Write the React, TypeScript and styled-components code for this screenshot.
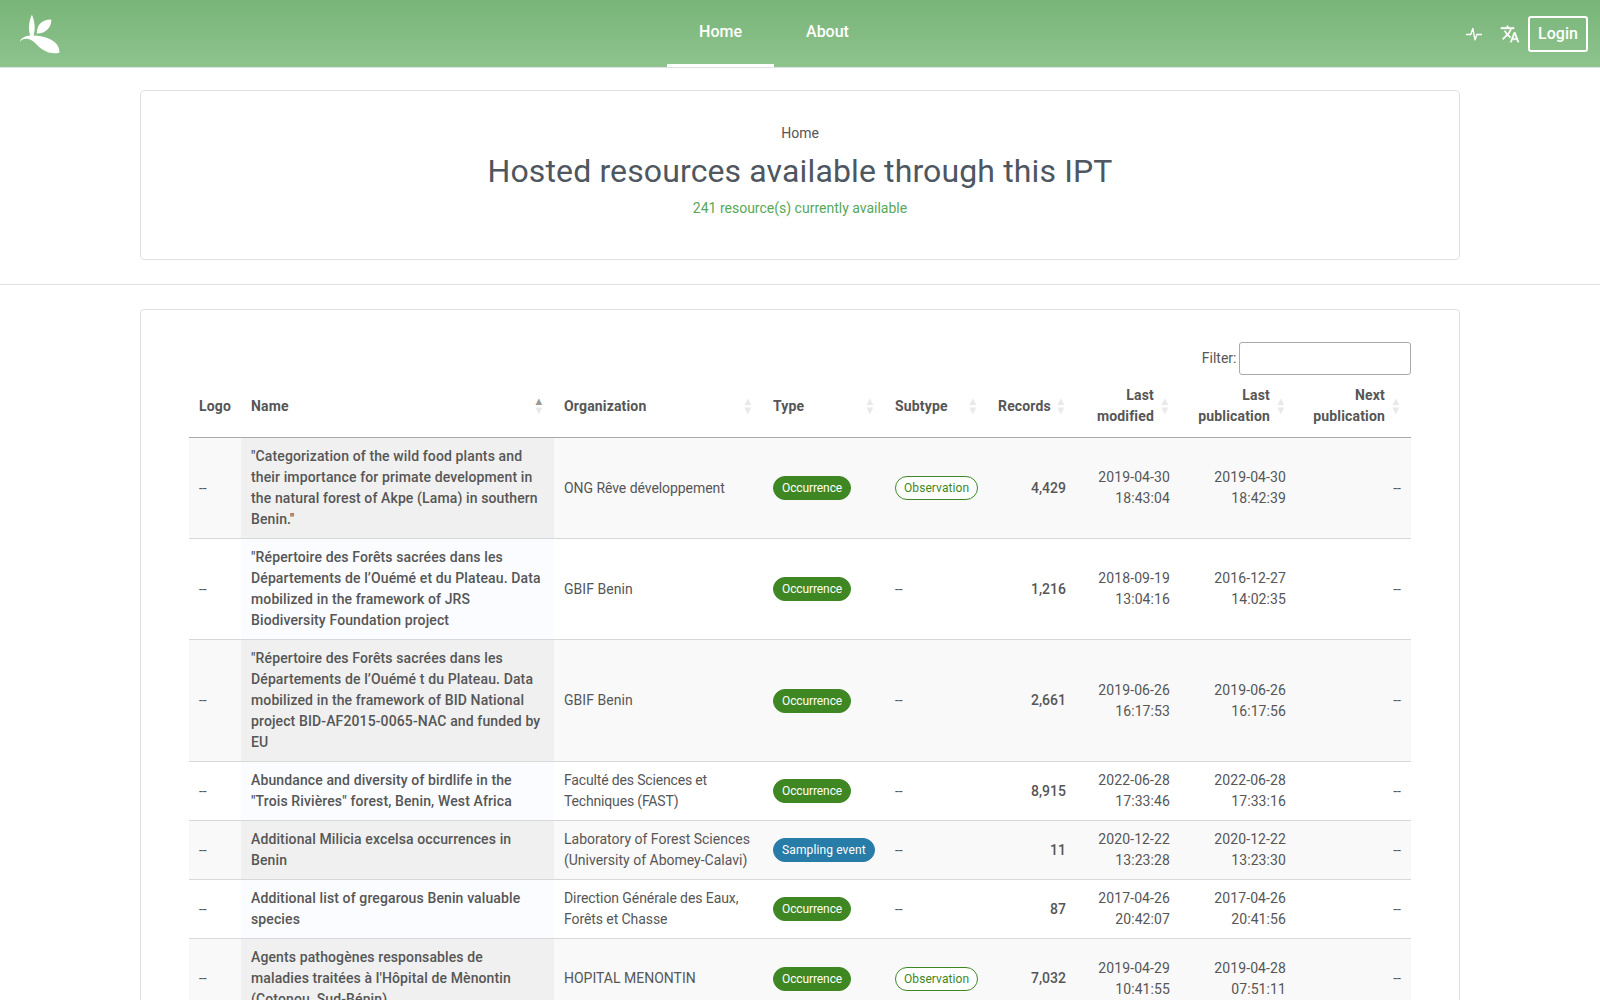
import React from "react";
import styled, { createGlobalStyle } from "styled-components";
import { MdTranslate } from "react-icons/md";

const GlobalStyle = createGlobalStyle`
  *, *::before, *::after { box-sizing: border-box; }
  html { overflow: hidden; }
  body {
    margin: 0;
    height: 1000px;
    overflow: hidden;
    background: #fff;
    color: #565656;
    font: 400 14px/21px Roboto, "Liberation Sans", sans-serif;
  }
`;

const Header = styled.header`
  display: grid;
  grid-template-columns: 1fr auto 1fr;
  height: 68px;
  padding: 0 12px 0 17px;
  background: linear-gradient(180deg, #78b578, #8ec38e) padding-box;
  border-bottom: 1px solid #dee2e6;
`;

const Logo = styled.a`
  display: block;
  padding-top: 12px;
  svg { display: block; }
`;

const Nav = styled.nav`
  display: flex;
  padding-right: 57px;
`;

const NavLink = styled.a<{ $active?: boolean }>`
  padding: 20px 32px 0;
  height: 67px;
  border-bottom: 3px solid ${(p) => (p.$active ? "#fff" : "transparent")};
  color: #fff;
  font-size: 16px;
  line-height: 24px;
  font-weight: 500;
`;

const Tools = styled.div`
  display: flex;
  justify-content: flex-end;
  align-items: center;
  color: #fff;
  svg { display: block; }
`;

const PulseLink = styled.a`
  margin-right: 18px;
`;

const LanguageLink = styled.a`
  margin-right: 8px;
  path:not([fill="none"]) { stroke: #fff; stroke-width: 0.3px; }
`;

const LoginButton = styled.button`
  width: 60px;
  height: 36px;
  padding: 0;
  border: 2px solid #fff;
  border-radius: 3px;
  background: transparent;
  color: #fff;
  font: 500 16px/24px Roboto, "Liberation Sans", sans-serif;
`;

const Section = styled.section<{ $top: number; $bottom?: boolean }>`
  padding-top: ${(p) => p.$top}px;
  padding-bottom: ${(p) => (p.$bottom ? 24 : 0)}px;
  border-bottom: ${(p) => (p.$bottom ? "1px solid #dee2e6" : "0")};
`;

const Card = styled.div`
  width: 1320px;
  margin: 0 auto;
  border: 1px solid #dee2e6;
  border-radius: 4px;
`;

const TitleCard = styled(Card)`
  height: 170px;
  padding-top: 32px;
  text-align: center;
`;

const TableCard = styled(Card)`
  padding: 32px 48px;
`;

const Breadcrumb = styled.div``;

const Title = styled.h1`
  margin: 8px 0;
  color: #4e565f;
  font-size: 32px;
  line-height: 38px;
  font-weight: 400;
  letter-spacing: 0.13px;
`;

const Count = styled.div`
  color: #58a858;
`;

const FilterRow = styled.label`
  display: flex;
  justify-content: flex-end;
  align-items: center;
  gap: 2.5px;
`;

const FilterInput = styled.input`
  width: 172px;
  height: 33px;
  padding: 5px;
  border: 1px solid #aaa;
  border-radius: 3px;
  background: transparent;
`;

const Table = styled.table`
  width: 1222px;
  table-layout: fixed;
  border-collapse: separate;
  border-spacing: 0;
`;

const HeadCell = styled.th<{ $right?: boolean; $sortable?: boolean; $sorted?: boolean }>`
  position: relative;
  padding: 10px ${(p) => (p.$sortable ? 26 : 10)}px 10px 10px;
  border-bottom: 1px solid #aaa;
  text-align: ${(p) => (p.$right ? "right" : "left")};
  font-weight: 700;
  letter-spacing: 0.16px;
  ${(p) =>
    p.$sortable &&
    `
    &::before, &::after {
      position: absolute;
      right: 9.5px;
      font-size: 11.2px;
      line-height: 9px;
      opacity: .125;
    }
    &::before { bottom: 50%; content: "▲"; opacity: ${p.$sorted ? 0.6 : 0.125}; }
    &::after { top: 50%; content: "▼"; }
  `}
`;

const Cell = styled.td<{ $right?: boolean; $strong?: boolean; $tracking?: number }>`
  padding: 8px 10px;
  border-bottom: 1px solid #d8d8d8;
  text-align: ${(p) => (p.$right ? "right" : "left")};
  vertical-align: middle;
  font-weight: ${(p) => (p.$strong ? 500 : 400)};
  letter-spacing: ${(p) => p.$tracking ?? 0}px;
`;

const NameCell = styled(Cell)`
  background: #fafcff;
  font-weight: 500;
  letter-spacing: 0.12px;
`;

const Row = styled.tr`
  &:nth-child(odd) { background: #f9f9f9; }
  &:nth-child(odd) ${NameCell} { background: #f0f0f0; }
`;

const badgeStyles = {
  occurrence: { background: "#3e8722", border: "#3e8722", text: "#fff", tracking: -0.1 },
  event: { background: "#277ca8", border: "#277ca8", text: "#fff", tracking: 0.12 },
  outline: { background: "#fff", border: "#3e8722", text: "#3e8722", tracking: 0.08 },
};

const Badge = styled.span<{ $kind: keyof typeof badgeStyles }>`
  display: inline-block;
  height: 24px;
  padding: 0 8px;
  border: 1px solid ${(p) => badgeStyles[p.$kind].border};
  border-radius: 12px;
  background: ${(p) => badgeStyles[p.$kind].background};
  color: ${(p) => badgeStyles[p.$kind].text};
  font-size: 12px;
  line-height: 22px;
  letter-spacing: ${(p) => badgeStyles[p.$kind].tracking}px;
  white-space: nowrap;
  vertical-align: middle;
`;

const columnWidths = [52, 313, 209, 122, 103, 88, 104, 116, 115];

type Resource = {
  name: string;
  org: string;
  orgTracking?: number;
  type: string;
  subtype?: string;
  records: string;
  modified: string;
  published: string;
};

const resources: Resource[] = [
  { name: "\"Categorization of the wild food plants and their importance for primate development in the natural forest of Akpe (Lama) in southern Benin.\"", org: "ONG Rêve développement", orgTracking: -0.06, type: "Occurrence", subtype: "Observation", records: "4,429", modified: "2019-04-30 18:43:04", published: "2019-04-30 18:42:39" },
  { name: "\"Répertoire des Forêts sacrées dans les Départements de l’Ouémé et du Plateau. Data mobilized in the framework of JRS Biodiversity Foundation project", org: "GBIF Benin", orgTracking: 0.05, type: "Occurrence", records: "1,216", modified: "2018-09-19 13:04:16", published: "2016-12-27 14:02:35" },
  { name: "\"Répertoire des Forêts sacrées dans les Départements de l’Ouémé t du Plateau. Data mobilized in the framework of BID National project BID-AF2015-0065-NAC and funded by EU", org: "GBIF Benin", orgTracking: 0.05, type: "Occurrence", records: "2,661", modified: "2019-06-26 16:17:53", published: "2019-06-26 16:17:56" },
  { name: "Abundance and diversity of birdlife in the \"Trois Rivières\" forest, Benin, West Africa", org: "Faculté des Sciences et Techniques (FAST)", orgTracking: -0.16, type: "Occurrence", records: "8,915", modified: "2022-06-28 17:33:46", published: "2022-06-28 17:33:16" },
  { name: "Additional Milicia excelsa occurrences in Benin", org: "Laboratory of Forest Sciences (University of Abomey-Calavi)", type: "Sampling event", records: "11", modified: "2020-12-22 13:23:28", published: "2020-12-22 13:23:30" },
  { name: "Additional list of gregarous Benin valuable species", org: "Direction Générale des Eaux, Forêts et Chasse", orgTracking: -0.08, type: "Occurrence", records: "87", modified: "2017-04-26 20:42:07", published: "2017-04-26 20:41:56" },
  { name: "Agents pathogènes responsables de maladies traitées à l'Hôpital de Mènontin (Cotonou, Sud-Bénin)", org: "HOPITAL MENONTIN", type: "Occurrence", subtype: "Observation", records: "7,032", modified: "2019-04-29 10:41:55", published: "2019-04-28 07:51:11" },
];

const GbifLogo = () => (
  <svg width="45.3" height="44" viewBox="90 239.1 539.7 523.9" fill="#fff">
    <path d="M325.5,495.4c0-89.7,43.8-167.4,174.2-167.4C499.6,417.9,440.5,495.4,325.5,495.4" />
    <path d="M534.3,731c24.4,0,43.2-3.5,62.4-10.5c0-71-42.4-121.8-117.2-158.4c-57.2-28.7-127.7-43.6-192.1-43.6c28.2-84.6,7.6-189.7-19.7-247.4c-30.3,60.4-49.2,164-20.1,248.3c-57.1,4.2-102.4,29.1-121.6,61.9c-1.4,2.5-4.4,7.8-2.6,8.8c1.4,0.7,3.6-1.5,4.9-2.7c20.6-19.1,47.9-28.4,74.2-28.4c60.7,0,103.4,50.3,133.7,80.5C401.3,704.3,464.8,731.2,534.3,731" />
  </svg>
);

const PulseIcon = () => (
  <svg width="16" height="16" viewBox="0 0 16 16" fill="none" stroke="#fff" strokeWidth="1.4" strokeLinejoin="round">
    <path d="M0 8.5H4.8L6.8 2.4L9 13.8L10.9 8.5H16" />
  </svg>
);

export default function App() {
  return (
    <>
      <GlobalStyle />
      <Header>
        <Logo><GbifLogo /></Logo>
        <Nav>
          <NavLink $active>Home</NavLink>
          <NavLink>About</NavLink>
        </Nav>
        <Tools>
          <PulseLink><PulseIcon /></PulseLink>
          <LanguageLink><MdTranslate size={20} /></LanguageLink>
          <LoginButton>Login</LoginButton>
        </Tools>
      </Header>
      <Section $top={22} $bottom>
        <TitleCard>
          <Breadcrumb>Home</Breadcrumb>
          <Title>Hosted resources available through this IPT</Title>
          <Count>241 resource(s) currently available</Count>
        </TitleCard>
      </Section>
      <Section $top={24}>
        <TableCard>
          <FilterRow>
            Filter:
            <FilterInput type="search" />
          </FilterRow>
          <Table>
            <colgroup>
              {columnWidths.map((w, i) => <col key={i} width={w} />)}
            </colgroup>
            <thead>
              <tr>
                <HeadCell>Logo</HeadCell>
                <HeadCell $sortable $sorted>Name</HeadCell>
                <HeadCell $sortable>Organization</HeadCell>
                <HeadCell $sortable>Type</HeadCell>
                <HeadCell $sortable>Subtype</HeadCell>
                <HeadCell $sortable $right>Records</HeadCell>
                <HeadCell $sortable $right>Last modified</HeadCell>
                <HeadCell $sortable $right>Last publication</HeadCell>
                <HeadCell $sortable $right>Next publication</HeadCell>
              </tr>
            </thead>
            <tbody>
              {resources.map((r) => (
                <Row key={r.name}>
                  <Cell>--</Cell>
                  <NameCell>{r.name}</NameCell>
                  <Cell $tracking={r.orgTracking}>{r.org}</Cell>
                  <Cell><Badge $kind={r.type === "Occurrence" ? "occurrence" : "event"}>{r.type}</Badge></Cell>
                  <Cell>{r.subtype ? <Badge $kind="outline">{r.subtype}</Badge> : "--"}</Cell>
                  <Cell $right $strong>{r.records}</Cell>
                  <Cell $right $tracking={0.1}>{r.modified}</Cell>
                  <Cell $right $tracking={0.1}>{r.published}</Cell>
                  <Cell $right>--</Cell>
                </Row>
              ))}
            </tbody>
          </Table>
        </TableCard>
      </Section>
    </>
  );
}
